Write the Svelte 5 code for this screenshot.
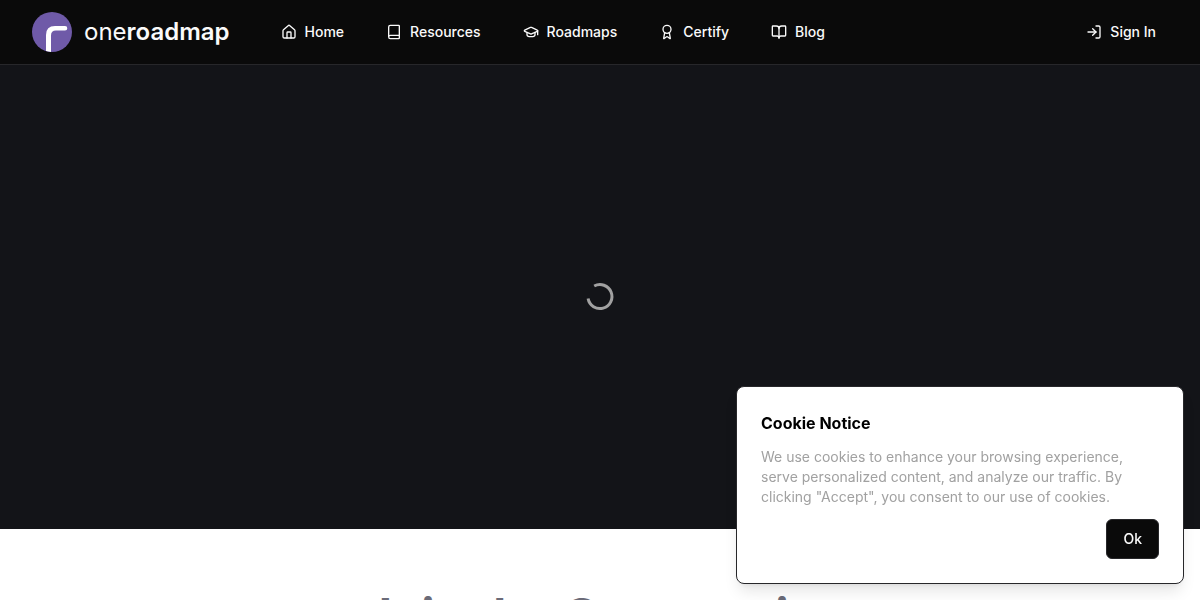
<script>
  const links = [
    { label: 'Home', icon: 'home' },
    { label: 'Resources', icon: 'book' },
    { label: 'Roadmaps', icon: 'cap' },
    { label: 'Certify', icon: 'award' },
    { label: 'Blog', icon: 'open' },
  ];

  const icons = {
    home: [
      'M15 21v-8a1 1 0 0 0-1-1h-4a1 1 0 0 0-1 1v8',
      'M3 10a2 2 0 0 1 .709-1.528l7-5.999a2 2 0 0 1 2.582 0l7 5.999A2 2 0 0 1 21 10v9a2 2 0 0 1-2 2H5a2 2 0 0 1-2-2z',
    ],
    book: ['M4 19.5v-15A2.5 2.5 0 0 1 6.5 2H19a1 1 0 0 1 1 1v18a1 1 0 0 1-1 1H6.5a1 1 0 0 1 0-5H20'],
    cap: [
      'M21.42 10.922a1 1 0 0 0-.019-1.838L12.83 5.18a2 2 0 0 0-1.66 0L2.6 9.08a1 1 0 0 0 0 1.832l8.57 3.908a2 2 0 0 0 1.66 0z',
      'M22 10v6',
      'M6 12.5V16a6 3 0 0 0 12 0v-3.5',
    ],
    award: [
      'm15.477 12.89 1.515 8.526a.5.5 0 0 1-.81.47l-3.58-2.687a1 1 0 0 0-1.197 0l-3.586 2.686a.5.5 0 0 1-.81-.469l1.514-8.526',
      'M18 8A6 6 0 1 1 6 8a6 6 0 0 1 12 0',
    ],
    open: [
      'M12 7v14',
      'M3 18a1 1 0 0 1-1-1V4a1 1 0 0 1 1-1h5a4 4 0 0 1 4 4 4 4 0 0 1 4-4h5a1 1 0 0 1 1 1v13a1 1 0 0 1-1 1h-6a3 3 0 0 0-3 3 3 3 0 0 0-3-3z',
    ],
    login: ['M15 3h4a2 2 0 0 1 2 2v14a2 2 0 0 1-2 2h-4', 'M10 17l5-5-5-5', 'M15 12H3'],
  };

  let showCookies = $state(true);
</script>

{#snippet icon(name)}
  <svg class="icon" viewBox="0 0 24 24" aria-hidden="true">
    {#each icons[name] as d}
      <path {d} />
    {/each}
  </svg>
{/snippet}

<header>
  <a class="brand" href="/">
    <svg class="logo" viewBox="0 0 40 40" aria-hidden="true">
      <circle cx="20" cy="20" r="20" fill="#6f5aa8" />
      <path
        d="M14 39.1V23q0-9 9-9H33a2.3 2.3 0 0 1 0 4.6H24q-5 0-5 5V40z"
        fill="#fff"
      />
    </svg>
    <span class="brand-name">one<strong>roadmap</strong></span>
  </a>

  <nav>
    {#each links as link}
      <a class="nav-link" href="/{link.label.toLowerCase()}">
        {@render icon(link.icon)}
        {link.label}
      </a>
    {/each}
  </nav>

  <a class="nav-link sign-in" href="/signin">
    {@render icon('login')}
    Sign In
  </a>
</header>

<main>
  <section class="hero">
    <svg class="spinner" viewBox="0 0 32 32" role="img" aria-label="Loading">
      <path d="M10.2 5A12 12 0 1 1 4.1 17.5" />
    </svg>
  </section>

  <section class="community">
    <h2>Join the Community</h2>
  </section>
</main>

{#if showCookies}
  <aside class="cookie">
    <h3>Cookie Notice</h3>
    <p>
      We use cookies to enhance your browsing experience, serve personalized content, and analyze
      our traffic. By clicking "Accept", you consent to our use of cookies.
    </p>
    <button onclick={() => (showCookies = false)}>Ok</button>
  </aside>
{/if}

<style>
  :global(body) {
    margin: 0;
    background: #fff;
    font-family: Inter, 'Liberation Sans', sans-serif;
    font-optical-sizing: none;
  }

  header {
    display: flex;
    align-items: center;
    height: 64px;
    padding: 0 32px;
    background: #0a0a0a;
    border-bottom: 1px solid #27272a;
  }

  a {
    color: #fafafa;
    text-decoration: none;
  }

  .brand {
    display: flex;
    align-items: center;
    gap: 12px;
    margin-right: 39px;
  }

  .logo {
    width: 40px;
    height: 40px;
  }

  .brand-name {
    font-size: 24px;
    line-height: 32px;
  }

  .brand-name strong {
    font-weight: 600;
  }

  nav {
    display: flex;
    gap: 18px;
  }

  .nav-link {
    display: flex;
    align-items: center;
    gap: 8px;
    padding: 8px 12px;
    font-size: 14px;
    font-weight: 500;
    line-height: 20px;
  }

  .sign-in {
    margin-left: auto;
  }

  .icon {
    width: 16px;
    height: 16px;
    fill: none;
    stroke: currentColor;
    stroke-width: 2;
    stroke-linecap: round;
    stroke-linejoin: round;
  }

  .hero {
    display: flex;
    align-items: center;
    justify-content: center;
    height: calc(100vh - 136px);
    background: #131418;
  }

  .spinner {
    width: 32px;
    height: 32px;
    fill: none;
    stroke: #a1a1a1;
    stroke-width: 3;
  }

  .community {
    padding: 64px 32px;
    text-align: center;
  }

  h2 {
    margin: 0;
    font-size: 48px;
    font-weight: 700;
    line-height: 46px;
    color: #6b6b78;
  }

  .cookie {
    position: fixed;
    right: 16px;
    bottom: 16px;
    box-sizing: border-box;
    display: flex;
    flex-direction: column;
    width: 448px;
    max-width: calc(100vw - 32px);
    padding: 24px;
    background: #fff;
    border: 1px solid #27272a;
    border-radius: 8px;
    box-shadow: 0 10px 15px -3px rgba(0, 0, 0, 0.1), 0 4px 6px -4px rgba(0, 0, 0, 0.1);
  }

  h3 {
    margin: 0 0 12px;
    font-size: 16px;
    font-weight: 700;
    line-height: 24px;
    color: #000;
  }

  p {
    margin: 0 0 12px;
    font-size: 14px;
    line-height: 20px;
    color: #a1a1a1;
  }

  button {
    align-self: flex-end;
    height: 40px;
    padding: 0 16px;
    font-family: inherit;
    font-size: 14px;
    font-weight: 500;
    line-height: 20px;
    color: #fafafa;
    background: #0a0a0a;
    border: 1px solid #27272a;
    border-radius: 6px;
    cursor: pointer;
  }
</style>
